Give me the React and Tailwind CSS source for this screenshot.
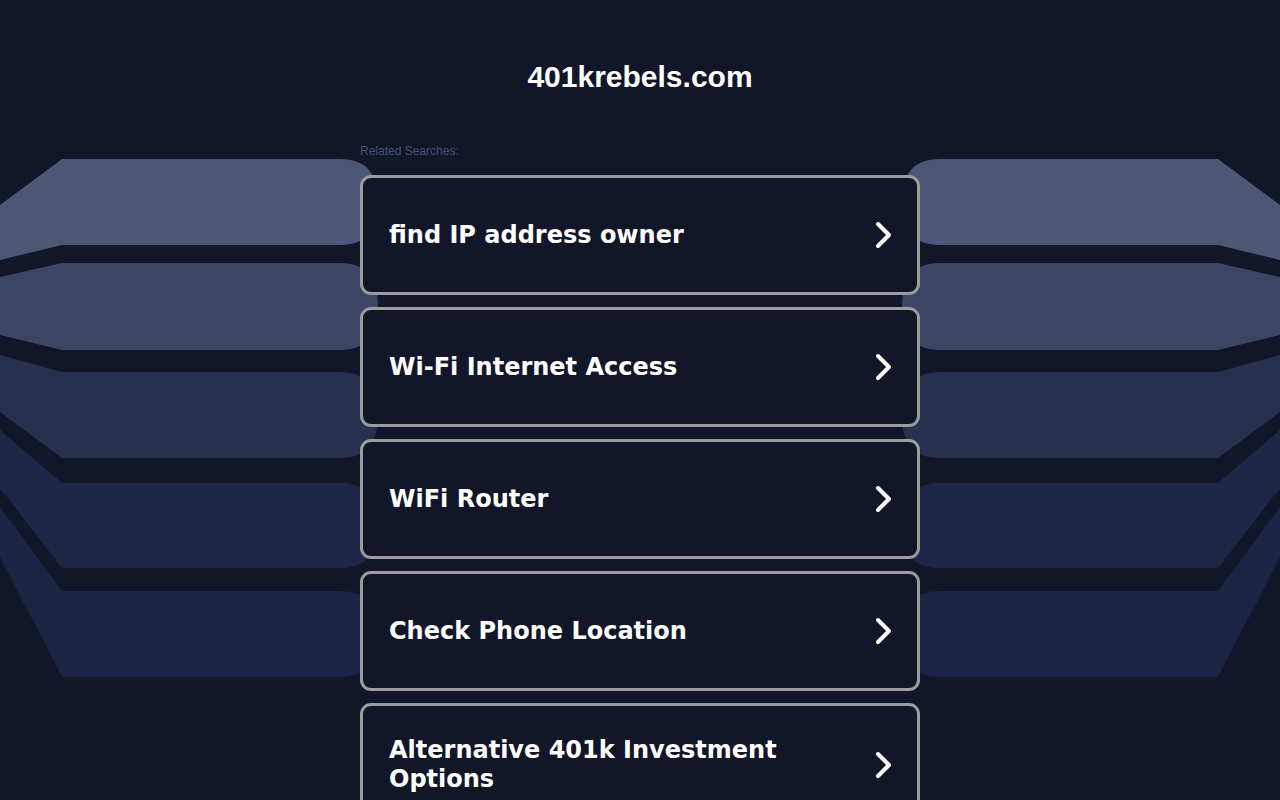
const searches = [
    "find IP address owner",
    "Wi-Fi Internet Access",
    "WiFi Router",
    "Check Phone Location",
    "Alternative 401k Investment Options",
];

// side bands: [y at x=0 top, kink top, kink bottom, y at x=0 bottom, fill]
const bands = [
    [205, 159, 245, 260, "#4c5675"],
    [277, 263, 350, 335, "#3c4564"],
    [355, 372, 458, 412, "#283050"],
    [430, 483, 568, 488, "#1f2748"],
    [507, 591, 677, 557, "#1d2546"],
];

function Bands({ flip }) {
    return (
        <svg
            width="400"
            height="800"
            viewBox="0 0 400 800"
            className={flip ? "absolute right-0 top-0 -scale-x-100" : "absolute left-0 top-0"}
        >
            <defs>
                <pattern id={flip ? "dotsR" : "dotsL"} width="3" height="3" patternUnits="userSpaceOnUse">
                    <rect x="1" y="1" width="1" height="1" fill="#151c36" opacity="0.6" />
                </pattern>
            </defs>
            {bands.map(([a, t, b, c, fill], i) => {
                const mid = (t + b) / 2;
                const d = `M0,${a} L62,${t} L340,${t} C366,${t} 378,${t + 14} 378,${mid} C378,${b - 14} 366,${b} 340,${b} L62,${b} L0,${c} Z`;
                return (
                    <g key={i}>
                        <path d={d} fill={fill} />
                        {i > 2 && <path d={d} fill={`url(#${flip ? "dotsR" : "dotsL"})`} />}
                    </g>
                );
            })}
        </svg>
    );
}

function Chevron() {
    return (
        <svg width="18" height="30" viewBox="0 0 18 30" className="shrink-0">
            <path d="M3,4 L14,15 L3,26" fill="none" stroke="#fff" strokeWidth="4" strokeLinecap="round" strokeLinejoin="round" />
        </svg>
    );
}

export default function App() {
    return (
        <div className="relative min-h-[800px] w-full overflow-hidden bg-[#111729] font-['Liberation_Sans',Arial,sans-serif]">
            <Bands />
            <Bands flip />
            <div className="relative mx-auto flex w-[560px] flex-col">
                <h1 className="pt-[58px] text-center text-[30px] font-bold leading-[38px] text-white">
                    401krebels.com
                </h1>
                <p className="mt-[48px] text-[12px] leading-[14px] text-[#46506f]">Related Searches:</p>
                <div className="mt-[17px] flex flex-col gap-[12px]">
                    {searches.map((s) => (
                        <a
                            key={s}
                            href="#"
                            className="flex min-h-[120px] items-center justify-between rounded-[11px] border-[3px] border-[#9c9c9f] bg-[#111729] py-[30px] pl-[26px] pr-[24px]"
                        >
                            <span className="font-['DejaVu_Sans',Verdana,sans-serif] text-[24px] font-bold leading-[29px] text-white">
                                {s}
                            </span>
                            <Chevron />
                        </a>
                    ))}
                </div>
            </div>
        </div>
    );
}
